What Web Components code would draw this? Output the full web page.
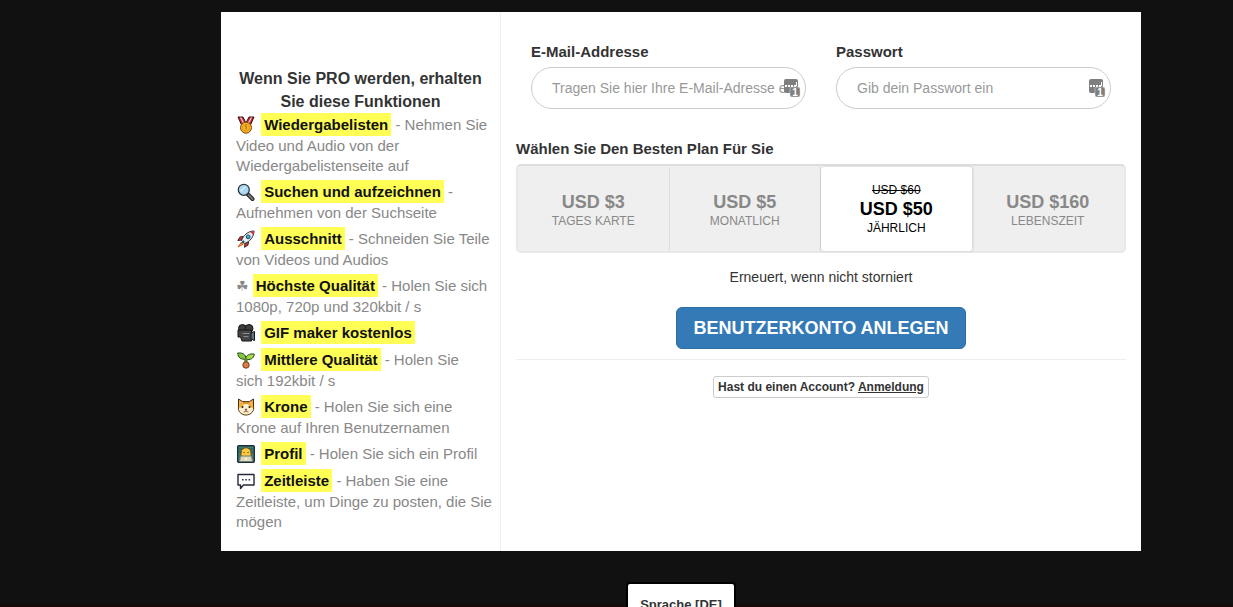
<!DOCTYPE html>
<html lang="de">
<head>
<meta charset="utf-8">
<meta name="viewport" content="width=device-width, initial-scale=1">
<title>PRO</title>
<style>
    body{
        margin: 0;
        background-color: #111;
        font-family: "Liberation Sans", Arial, sans-serif;
        font-size: 14px;
        line-height: 20px;
        color: #333;
    }
</style>
</head>
<body>
<signup-page>
    <feature-list slot="features">
        <span slot="title">Wenn Sie PRO werden, erhalten Sie diese Funktionen</span>
        <feature-item icon="medal" name="Wiedergabelisten">- Nehmen Sie Video und Audio von der Wiedergabelistenseite auf</feature-item>
        <feature-item icon="search" name="Suchen und aufzeichnen">- Aufnehmen von der Suchseite</feature-item>
        <feature-item icon="rocket" name="Ausschnitt">- Schneiden Sie Teile von Videos und Audios</feature-item>
        <feature-item icon="clover" name="Höchste Qualität">- Holen Sie sich 1080p, 720p und 320kbit / s</feature-item>
        <feature-item icon="camera" name="GIF maker kostenlos"></feature-item>
        <feature-item icon="sprout" name="Mittlere Qualität">- Holen Sie <br>sich 192kbit / s</feature-item>
        <feature-item icon="cat" name="Krone">- Holen Sie sich eine <br>Krone auf Ihren Benutzernamen</feature-item>
        <feature-item icon="profile" name="Profil">- Holen Sie sich ein Profil</feature-item>
        <feature-item icon="chat" name="Zeitleiste">- Haben Sie eine Zeitleiste, um Dinge zu posten, die Sie mögen</feature-item>
    </feature-list>
    <text-field slot="fields" type="email" placeholder="Tragen Sie hier Ihre E-Mail-Adresse ein">E-Mail-Addresse</text-field>
    <text-field slot="fields" type="password" placeholder="Gib dein Passwort ein">Passwort</text-field>
    <plan-picker slot="plans">Wählen Sie Den Besten Plan Für Sie</plan-picker>
    <span slot="note">Erneuert, wenn nicht storniert</span>
    <span slot="submit">Benutzerkonto anlegen</span>
    <login-hint slot="login" action="Anmeldung">Hast du einen Account?</login-hint>
    <language-button slot="language">Sprache [DE]</language-button>
</signup-page>

<script>
const ICONS = {
    medal: `
        <path d="M1 1h5l3 6 3-6h5l-4 9H5z" fill="#c9252d" stroke="#3a1414"/>
        <path d="M3.500 1.500l4 7M14.500 1.500l-4 7" stroke="#f4d9d9" stroke-width="1.200"/>
        <circle cx="9" cy="11.700" r="5.500" fill="#f7b52c" stroke="#7d4a05"/>
        <circle cx="9" cy="11.700" r="3.500" fill="none" stroke="#d98a14" stroke-width=".8"/>
        <path d="M8 10.500l1.200-1v4" fill="none" stroke="#a8670a"/>`,
    search: `
        <path d="M10.500 11l5 5" stroke="#222" stroke-width="4" stroke-linecap="round"/>
        <path d="M11.500 12l4 4" stroke="#777" stroke-width="2" stroke-linecap="round"/>
        <circle cx="6.800" cy="6.800" r="5.500" fill="#a9d8f3" stroke="#30383f" stroke-width="1.300"/>
        <path d="M3.500 8.500l5-5" stroke="#d7effc" stroke-width="1.500"/>`,
    rocket: `
        <path d="M6 6.500L3 7 .800 10.500l4-.5zM11.500 12l-.5 3-3.500 2.300.5-4z" fill="#e0332d" stroke="#44211f"/>
        <path d="M4.500 10.500C6 5.500 11 1 17 1c0 6-4.500 11-9.500 12.500z" fill="#e5edf3" stroke="#27323d"/>
        <path d="M13 1.700L17 1l-.7 4z" fill="#df332d"/>
        <circle cx="11.200" cy="6.800" r="1.900" fill="#4aaae5" stroke="#24425b"/>
        <path d="M4.500 12L1 17l5.500-3z" fill="#f9b32d" stroke="#d4572c"/>
        <path d="M6 10l-2 4 4-2z" fill="#345b77"/>`,
    camera: `
        <circle cx="5.500" cy="4.500" r="4" fill="#3e3e40" stroke="#151515"/>
        <circle cx="12" cy="4.500" r="4" fill="#3e3e40" stroke="#151515"/>
        <path d="M1 6h13.500v11H5l-1.500-4H1z" fill="#454547" stroke="#151515"/>
        <path d="M14 9l3.500-1.500v9L14 15z" fill="#60728a" stroke="#151515"/>
        <path d="M5.500 9.500h7M6.500 12.500h5" stroke="#8c8c8e"/>`,
    sprout: `
        <path d="M9 7c0 3-.2 4.500 0 7" fill="none" stroke="#24510f" stroke-width="3"/>
        <path d="M9 8C4 9 1 6.500 .700 2 5 1.500 9 3 9 8z" fill="#83c83c" stroke="#234a13"/>
        <path d="M9 8C9 4 12.500 2.500 17.300 3 17 7.500 13 9.500 9 8z" fill="#a7d94c" stroke="#234a13"/>
        <path d="M9 7v6" stroke="#83c83c"/>
        <circle cx="9" cy="14" r="3.200" fill="#d77f46" stroke="#7e3c18"/>`,
    cat: `
        <path d="M1.500 1l4 2.500h7l4-2.500v7c1 5-2.500 9-7.500 9S.500 13 1.500 8z" fill="#f6b13d" stroke="#463013"/>
        <path d="M2 10c2 .2 4-1 5-4h4c1 3 3 4.200 5 4 .2 4-3 6.300-7 6.300S1.800 14 2 10z" fill="#fff1cf"/>
        <path d="M7 3.500v2.500M9 3.500v2.500M11 3.500v2.500" stroke="#b77319"/>
        <path d="M3 3l1.500 2M15 3l-1.500 2" stroke="#f5a5a0"/>
        <circle cx="5.500" cy="9" r="1" fill="#222"/>
        <circle cx="12.500" cy="9" r="1" fill="#222"/>
        <path d="M8 11.200h2L9 12.500zM6.500 14Q8 14.300 9 12.500 10 14.300 11.500 14" fill="#d95f5b" stroke="#61432c" stroke-width=".7"/>`,
    profile: `
        <rect x=".700" y=".700" width="16.600" height="16.600" rx="1" fill="#3f8073" stroke="#1d2e3e" stroke-width="1.400"/>
        <path d="M1.500 4h15M1.500 7h15" stroke="#1d554c"/>
        <path d="M4 8c0-7 10-7 10 0v4H4z" fill="#ffc83d" stroke="#684a1b"/>
        <path d="M6.500 7.500h1M10.500 7.500h1" stroke="#34291c"/>
        <path d="M2.500 16.500l1-5.500h11l1 5.500z" fill="#e0d9b8" stroke="#6f7f74"/>
        <circle cx="9" cy="14" r="1" fill="#fff"/>`,
    chat: `
        <path d="M1 2.500h16v10.500H6.500L3.500 16.500V13H1z" fill="#fff" stroke="#222b36" stroke-width="1.400" stroke-linejoin="round"/>
        <path d="M5 7h1.500v1.500H5zM8.300 7h1.500v1.500H8.300zM11.600 7h1.500v1.500h-1.500z" fill="#222b36"/>`
};

class FeatureItem extends HTMLElement{

    constructor(){
        super();
        this.attachShadow({ mode: 'open'});
    }

    connectedCallback(){
        const icon = this.getAttribute("icon");
        // The clover is a plain text symbol, the others are drawn
        const glyph = icon === "clover"
            ? `<span class="symbol">&#9752;</span>`
            : `<svg viewBox="0 0 18 18" fill="none" aria-hidden="true">${ICONS[icon]}</svg>`;
        this.shadowRoot.innerHTML = `
        <style>
            :host{
                display: block;
                margin-bottom: 4px;
                color: #888;
                font-size: 15px;
                line-height: 20px;
            }

            svg{
                width: 18px;
                height: 18px;
                margin: 0 2px 0 1px;
                vertical-align: -4px;
            }

            .symbol{
                font-family: "DejaVu Sans", sans-serif;
                font-size: 14px;
                line-height: 16px;
            }

            mark{
                display: inline-block;
                padding: 0 3px;
                line-height: 23px;
                font-weight: bold;
                color: #111;
                background-color: #ff5;
            }
        </style>
        ${glyph} <mark>${this.getAttribute("name")}</mark> <slot></slot>
        `;
    }
}

class FeatureList extends HTMLElement{

    constructor(){
        super();
        this.attachShadow({ mode: 'open'});
        this.shadowRoot.innerHTML = `
        <style>
            :host{
                display: block;
                padding: 55px 5px 15px 15px;
            }

            h2{
                margin: 0;
                padding-right: 10px;
                font-size: 16px;
                line-height: 23px;
                text-align: center;
            }
        </style>
        <h2><slot name="title"></slot></h2>
        <slot></slot>
        `;
    }
}

class TextField extends HTMLElement{

    constructor(){
        super();
        this.attachShadow({ mode: 'open'});
    }

    connectedCallback(){
        this.shadowRoot.innerHTML = `
        <style>
            :host{
                display: block;
                flex: 1;
                min-width: 0;
            }

            label{
                display: block;
                margin-bottom: 5px;
                font-size: 15px;
                font-weight: bold;
            }

            .box{
                position: relative;
            }

            input{
                display: block;
                box-sizing: border-box;
                width: 100%;
                height: 42px;
                padding: 0 20px;
                border: 1px solid #ccc;
                border-radius: 21px;
                background-color: #fff;
                font: inherit;
                color: #555;
            }

            input::placeholder{
                color: #999;
                opacity: 1;
            }

            .box svg{
                position: absolute;
                top: 12px;
                right: 5px;
                width: 18px;
                height: 18px;
            }

            .box text{
                font-size: 10px;
                font-weight: bold;
                fill: #fff;
            }
        </style>
        <label for="field"><slot></slot></label>
        <div class="box">
            <input id="field" type="${this.getAttribute("type")}" placeholder="${this.getAttribute("placeholder")}">
            <svg viewBox="0 0 18 18">
                <rect x="1" y="0" width="14" height="14" rx="2" fill="#7f7f7f"/>
                <path d="M2 6h2v2H2zM5 6h2v2H5zM8 6h2v2H8zM11 6h2v2h-2zM13 3h1v4h-1z" fill="#fff"/>
                <rect x="7" y="8" width="10" height="10" rx="2" fill="#7f7f7f" stroke="#ddd" stroke-width=".5"/>
                <text x="12" y="17" text-anchor="middle">1</text>
            </svg>
        </div>
        `;
    }
}

const PLANS = [
    { price: "USD $3", period: "Tages Karte" },
    { price: "USD $5", period: "Monatlich" },
    { price: "USD $50", period: "Jährlich", oldPrice: "USD $60", selected: true },
    { price: "USD $160", period: "Lebenszeit" }
];

class PlanPicker extends HTMLElement{

    constructor(){
        super();
        this.attachShadow({ mode: 'open'});
        this._initialRender();
    }

    _initialRender(){
        const plans = PLANS.map((plan, i) => `
            <label>
                <input type="radio" name="plan" value="${i}" ${plan.selected ? "checked" : ""}>
                <span class="plan">
                    ${plan.oldPrice ? `<s>${plan.oldPrice}</s>` : ""}
                    <strong>${plan.price}</strong>
                    <span class="period">${plan.period}</span>
                </span>
            </label>`).join("");
        this.shadowRoot.innerHTML = `
        <style>
            :host{
                display: block;
            }

            fieldset{
                min-width: 0;
                margin: 0;
                padding: 0;
                border: 0;
            }

            legend{
                padding: 0;
                margin-bottom: 5px;
                font-size: 15px;
                font-weight: bold;
            }

            .plans{
                display: grid;
                grid-template-columns: repeat(4, 1fr);
                padding-top: 1px;
                border: 2px solid #e9e9e9;
                border-top-color: #ddd;
                border-radius: 5px;
                background-color: #efefef;
            }

            label{
                display: grid;
                cursor: pointer;
            }

            input{
                grid-area: 1 / 1;
                place-self: center;
                margin: 0;
                opacity: 0;
            }

            .plan{
                grid-area: 1 / 1;
                display: flex;
                flex-direction: column;
                justify-content: center;
                box-sizing: border-box;
                min-height: 84px;
                padding-top: 3px;
                border-right: 1px solid #ddd;
                border-radius: 3px;
                text-align: center;
                font-size: 12px;
                line-height: 18px;
                color: #888;
                z-index: 1;
            }

            label:last-child .plan{
                border-right-color: transparent;
            }

            :checked + .plan{
                padding-top: 0;
                color: #000;
                background-color: #fff;
                box-shadow: 0 0 2px rgb(0 0 0 / 20%);
            }

            :focus-visible + .plan{
                outline: 2px solid #337ab7;
            }

            strong{
                font-size: 18px;
                line-height: 20px;
            }

            .period{
                text-transform: uppercase;
            }
        </style>
        <fieldset>
            <legend><slot></slot></legend>
            <div class="plans">${plans}</div>
        </fieldset>
        `;
    }
}

class LoginHint extends HTMLElement{

    constructor(){
        super();
        this.attachShadow({ mode: 'open'});
    }

    connectedCallback(){
        this.shadowRoot.innerHTML = `
        <style>
            :host{
                display: block;
                padding: 1px 4px;
                border: 1px solid #ccc;
                border-radius: 3px;
                font-size: 12px;
                line-height: 18px;
                font-weight: bold;
            }

            a{
                color: inherit;
                text-decoration: underline;
            }
        </style>
        <slot></slot> <a href="#login">${this.getAttribute("action")}</a>
        `;
    }
}

class LanguageButton extends HTMLElement{

    constructor(){
        super();
        this.attachShadow({ mode: 'open'});
        this.shadowRoot.innerHTML = `
        <style>
            :host{
                display: block;
            }

            button{
                padding: 11px 12px;
                border: 2px solid #000;
                border-radius: 4px;
                background-color: #fff;
                font: bold 13px/20px "Liberation Sans", Arial, sans-serif;
                color: #333;
                cursor: pointer;
            }
        </style>
        <button type="button"><slot></slot></button>
        `;
    }
}

class SignupPage extends HTMLElement{

    constructor(){
        super();
        this.attachShadow({ mode: 'open'});
        this.shadowRoot.innerHTML = `
        <style>
            :host{
                display: flex;
                flex-direction: column;
                align-items: center;
                box-sizing: border-box;
                height: 100vh;
                padding: 12px 0 0 129px;
                overflow: hidden;
                background: linear-gradient(#1a080b, #1a080b) bottom / 100% 2px no-repeat;
            }

            main{
                display: grid;
                grid-template-columns: 280px 1fr;
                flex: none;
                width: 100%;
                max-width: 920px;
                background-color: #fff;
            }

            aside{
                border-right: 1px solid #eee;
            }

            form{
                display: flex;
                flex-direction: column;
                padding: 30px 15px;
            }

            .fields{
                display: flex;
                gap: 30px;
                padding: 0 15px;
                margin-bottom: 30px;
            }

            p{
                margin: 14px 0 20px;
                text-align: center;
            }

            .submit{
                align-self: center;
                padding: 10px 16px;
                border: 1px solid #2e6da4;
                border-radius: 6px;
                background-color: #337ab7;
                font: bold 18px/20px "Liberation Sans", Arial, sans-serif;
                text-transform: uppercase;
                color: #fff;
                cursor: pointer;
            }

            hr{
                width: 100%;
                margin: 10px 0 16px;
                border: 0;
                border-top: 1px solid #eee;
            }

            .login{
                align-self: center;
            }

            footer{
                flex: none;
                margin-top: 31px;
            }
        </style>
        <main>
            <aside><slot name="features"></slot></aside>
            <form>
                <div class="fields"><slot name="fields"></slot></div>
                <slot name="plans"></slot>
                <p><slot name="note"></slot></p>
                <button class="submit" type="button"><slot name="submit"></slot></button>
                <hr>
                <div class="login"><slot name="login"></slot></div>
            </form>
        </main>
        <footer><slot name="language"></slot></footer>
        `;
    }
}

customElements.define("feature-item", FeatureItem);
customElements.define("feature-list", FeatureList);
customElements.define("text-field", TextField);
customElements.define("plan-picker", PlanPicker);
customElements.define("login-hint", LoginHint);
customElements.define("language-button", LanguageButton);
customElements.define("signup-page", SignupPage);
</script>
</body>
</html>
